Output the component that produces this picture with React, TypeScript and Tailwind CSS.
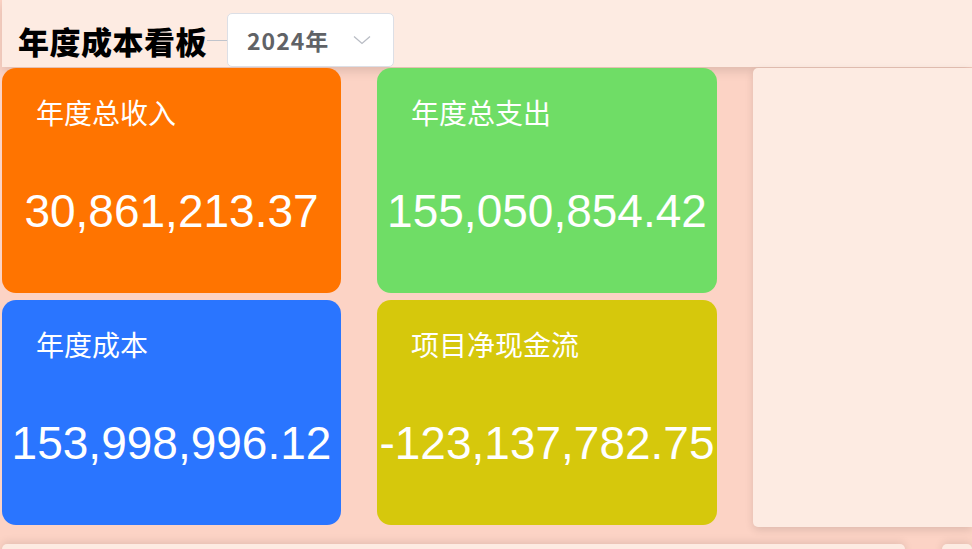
import React from 'react';

type Stat = { title: string; value: string; color: string };

const stats: Stat[] = [
  { title: '年度总收入', value: '30,861,213.37', color: 'bg-[#ff7400]' },
  { title: '年度总支出', value: '155,050,854.42', color: 'bg-[#6fdd66]' },
  { title: '年度成本', value: '153,998,996.12', color: 'bg-[#2a75ff]' },
  { title: '项目净现金流', value: '-123,137,782.75', color: 'bg-[#d6c80c]' },
];

function StatCard({ title, value, color }: Stat) {
  return (
    <div className={`${color} rounded-[14px] h-[225px] flex flex-col pt-[26px]`}>
      <div
        className="pl-[34px] text-white text-[28px] leading-[36px]"
        style={{ fontFamily: '"Noto Sans CJK SC", "Noto Sans", sans-serif' }}
      >
        {title}
      </div>
      <div
        className="mt-[53px] text-center text-white text-[46px] leading-[56px] whitespace-nowrap"
        style={{ fontFamily: '"Liberation Sans", Arial, sans-serif' }}
      >
        {value}
      </div>
    </div>
  );
}

export default function App() {
  return (
    <div className="w-[972px] h-[549px] overflow-hidden bg-[#fcd3c5] pl-[2px]">
      {/* Header */}
      <div className="h-[67px] bg-[#fdebe2] shadow-[0_4px_10px_rgba(0,0,0,0.12)] pl-[16px] pt-[13px]">
        <div className="flex items-center h-[54px]">
          <h1
            className="text-[31px] font-black text-black tracking-[0.5px] leading-none"
            style={{ fontFamily: '"Noto Sans CJK SC", sans-serif' }}
          >
            年度成本看板
          </h1>
          <div className="w-[20px] h-px bg-[#c0c4cc]" />
          <div className="w-[167px] h-[54px] bg-white border border-[#dcdfe6] rounded-[5px] flex items-center pl-[19px] pr-[22px] justify-between">
            <span
              className="text-[23px] font-bold text-[#606266] tracking-[1px] leading-none"
              style={{ fontFamily: '"Noto Sans CJK SC", "Noto Sans", sans-serif' }}
            >
              2024年
            </span>
            <svg width="18" height="10" viewBox="0 0 18 10" fill="none">
              <path d="M1 1.5 L9 8.5 L17 1.5" stroke="#b8bcc4" strokeWidth="1.3" />
            </svg>
          </div>
        </div>
      </div>

      {/* Body */}
      <div className="flex pt-px">
        <div className="grid grid-cols-[339px_340px] gap-x-[36px] gap-y-[5px]">
          {stats.map((s) => (
            <StatCard key={s.title} {...s} />
          ))}
        </div>
        <div className="ml-[36px] flex-1 h-[459px] bg-[#fdebe2] rounded-l-[5px] shadow-[0_3px_8px_rgba(0,0,0,0.12)]" />
      </div>

      {/* Bottom panels */}
      <div className="flex mt-[17px] gap-[37px]">
        <div className="w-[903px] h-[60px] bg-[#fdebe2] rounded-[5px] shadow-[0_-2px_8px_rgba(0,0,0,0.1)]" />
        <div className="flex-1 h-[60px] bg-[#fdebe2] rounded-[5px] shadow-[0_-2px_8px_rgba(0,0,0,0.1)]" />
      </div>
    </div>
  );
}
